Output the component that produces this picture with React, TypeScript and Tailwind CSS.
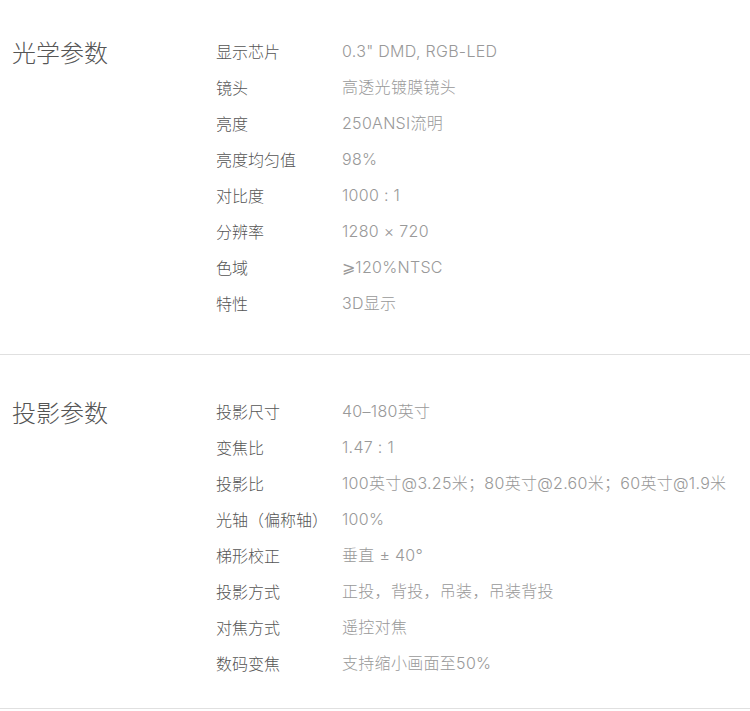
import React from "react";

const sections = [
  {
    title: "光学参数",
    pt: "pt-[33px]",
    pb: "pb-[33px]",
    rows: [
      ["显示芯片", "0.3\" DMD, RGB-LED"],
      ["镜头", "高透光镀膜镜头"],
      ["亮度", "250ANSI流明"],
      ["亮度均匀值", "98%"],
      ["对比度", "1000 : 1"],
      ["分辨率", "1280 × 720"],
      ["色域", "⩾120%NTSC"],
      ["特性", "3D显示"],
    ],
  },
  {
    title: "投影参数",
    pt: "pt-[38px]",
    pb: "pb-[27px]",
    rows: [
      ["投影尺寸", "40–180英寸"],
      ["变焦比", "1.47 : 1"],
      ["投影比", "100英寸@3.25米；80英寸@2.60米；60英寸@1.9米"],
      ["光轴（偏称轴）", "100%"],
      ["梯形校正", "垂直 ± 40°"],
      ["投影方式", "正投，背投，吊装，吊装背投"],
      ["对焦方式", "遥控对焦"],
      ["数码变焦", "支持缩小画面至50%"],
    ],
  },
];

export default function App() {
  return (
    <div
      className="w-[750px] h-[711px] bg-white overflow-hidden"
      style={{ fontFamily: '"Noto Sans CJK SC", "Noto Sans", sans-serif' }}
    >
      {sections.map((s) => (
        <div key={s.title} className={`flex border-b border-[#e0e0e0] ${s.pt} ${s.pb}`}>
          <div className="w-[216px] shrink-0 pl-[12px] pt-[1px] text-[24px] leading-[36px] text-[#555] font-light">
            {s.title}
          </div>
          <div className="flex flex-col">
            {s.rows.map(([k, v]) => (
              <div key={k} className="flex h-[36px] items-center text-[16px] font-light">
                <div className="w-[126px] shrink-0 text-[#555]">{k}</div>
                <div
                  className="text-[#999] whitespace-nowrap tracking-[0.3px]"
                  style={{ fontFamily: 'Inter, "Noto Sans CJK SC", sans-serif' }}
                >
                  {v}
                </div>
              </div>
            ))}
          </div>
        </div>
      ))}
    </div>
  );
}
